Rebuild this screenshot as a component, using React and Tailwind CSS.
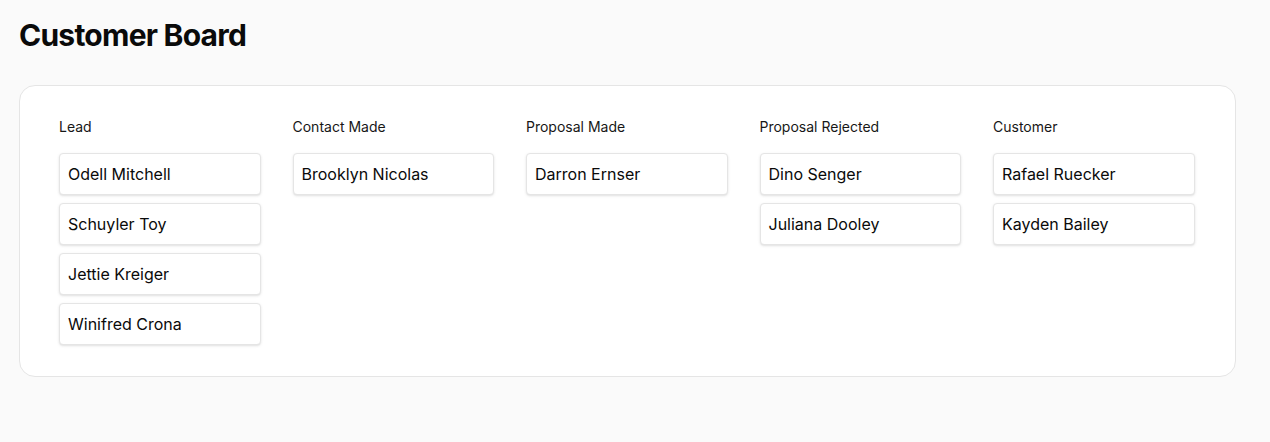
const columns = [
  { title: "Lead", items: ["Odell Mitchell", "Schuyler Toy", "Jettie Kreiger", "Winifred Crona"] },
  { title: "Contact Made", items: ["Brooklyn Nicolas"] },
  { title: "Proposal Made", items: ["Darron Ernser"] },
  { title: "Proposal Rejected", items: ["Dino Senger", "Juliana Dooley"] },
  { title: "Customer", items: ["Rafael Ruecker", "Kayden Bailey"] },
];

export default function App() {
  return (
    <div className="min-h-[442px] bg-[#fafafa] pl-[19px] pt-[17px] text-[#0a0a0a]" style={{ fontFamily: "Inter, 'Liberation Sans', sans-serif" }}>
      <h1 className="text-3xl font-bold leading-9 tracking-tight">Customer Board</h1>
      <div className="mt-8 flex w-[1217px] gap-8 rounded-2xl border border-[#e5e5e5] bg-white pb-[31px] pl-[39px] pr-[40.5px] pt-[31px]">
        {columns.map((col) => (
          <div key={col.title} className="flex flex-1 flex-col">
            <div className="text-sm leading-5 text-[#171717]">{col.title}</div>
            <div className="mt-4 flex flex-col gap-2">
              {col.items.map((name) => (
                <div key={name} className="rounded border border-[#e5e5e5] bg-white px-2 py-2 text-base leading-6 shadow-sm">
                  {name}
                </div>
              ))}
            </div>
          </div>
        ))}
      </div>
    </div>
  );
}
